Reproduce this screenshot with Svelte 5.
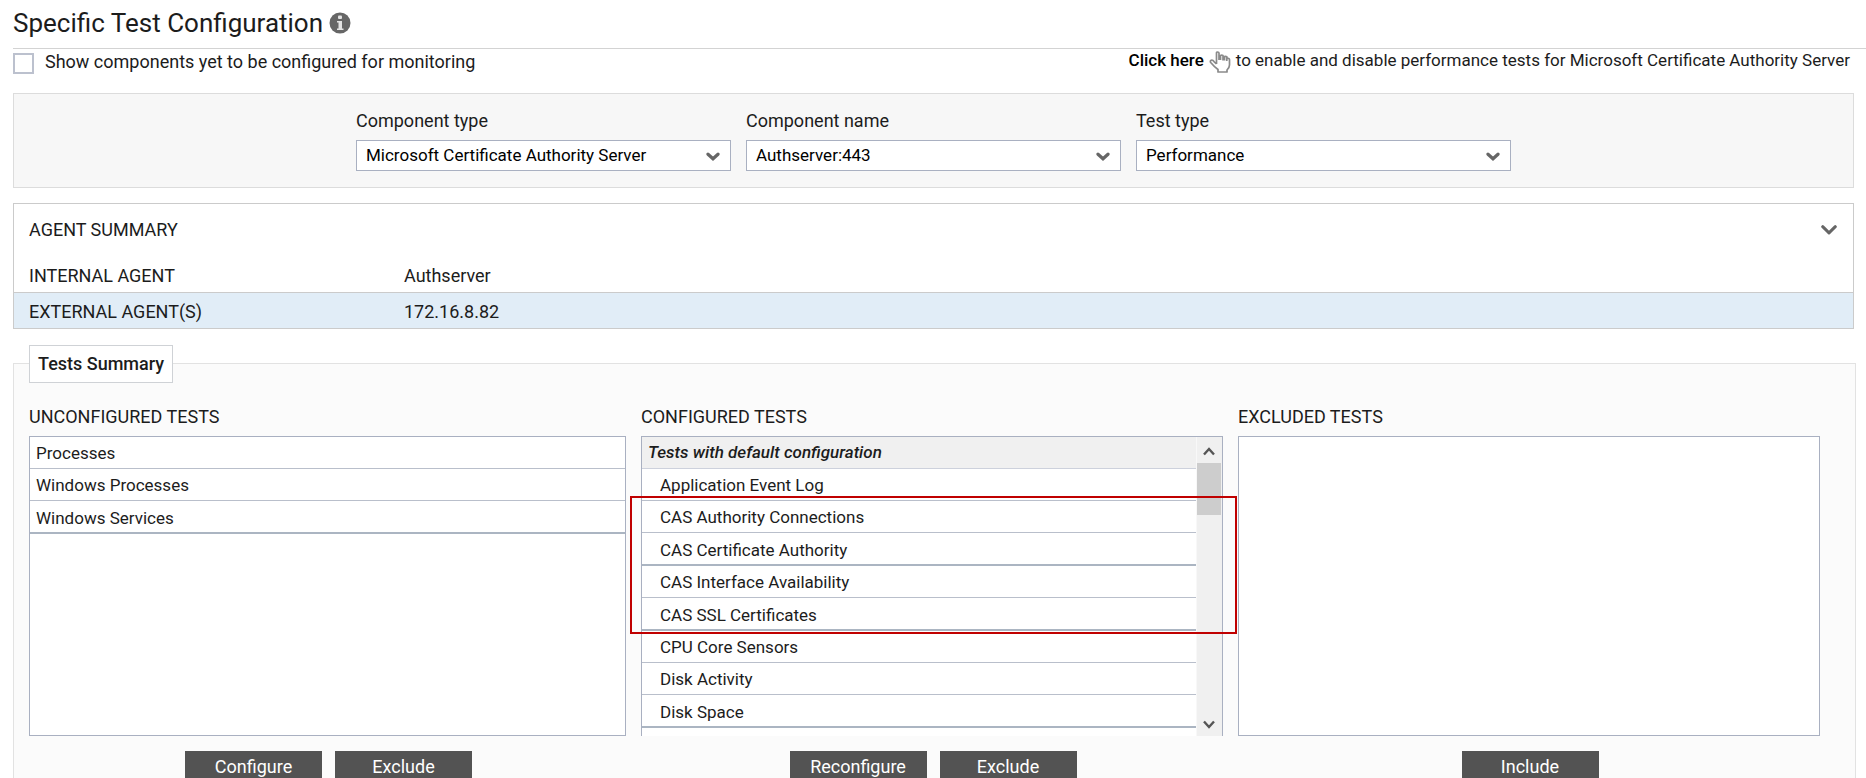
<script>
  const filters = [
    { id: 'component-type', label: 'Component type', options: ['Microsoft Certificate Authority Server'] },
    { id: 'component-name', label: 'Component name', options: ['Authserver:443'] },
    { id: 'test-type', label: 'Test type', options: ['Performance'] }
  ];
  const agents = [
    { kind: 'INTERNAL AGENT', host: 'Authserver' },
    { kind: 'EXTERNAL AGENT(S)', host: '172.16.8.82' }
  ];
  const unconfigured = [
    { name: 'Processes' },
    { name: 'Windows Processes' },
    { name: 'Windows Services', thick: true }
  ];
  const configured = [
    { name: 'Application Event Log' },
    { name: 'CAS Authority Connections' },
    { name: 'CAS Certificate Authority', thick: true },
    { name: 'CAS Interface Availability' },
    { name: 'CAS SSL Certificates', thick: true },
    { name: 'CPU Core Sensors' },
    { name: 'Disk Activity' },
    { name: 'Disk Space', thick: true }
  ];
</script>

<main>
  <header>
    <h1>Specific Test Configuration</h1>
    <svg class="info" viewBox="0 0 22 22" aria-hidden="true">
      <circle cx="11" cy="11" r="10.5" fill="#666" />
      <rect x="9" y="3.5" width="4" height="3.5" rx="1" fill="#e4e4e4" />
      <path d="M8 9h5v7.5h1.5v1.5h-6.500v-1.500h1.500v-6h-1.500z" fill="#e4e4e4" />
    </svg>
  </header>

  <div class="toolbar">
    <label class="check"><input type="checkbox" />Show components yet to be configured for monitoring</label>
    <p>
      <a href="#tests">Click here</a>
      <svg class="hand" viewBox="0 0 22 22" aria-hidden="true">
        <path d="M7.500 13V2q0-1 1.200-1t1.300 1V9M11.500 9V4.500q1.200-.6 2.500 0V9.500M15.500 9.500V5.500q1.200-.5 2.300.2V10M17.800 7.500q2.700-.5 2.700 1V14q0 2.500-2.500 5v2H9v-2.500Q5 15.500 1.700 11.500q-.9-1.700.5-2.200 1.600-.5 3 1.500L7.500 13" fill="none" stroke="#8a8a8a" stroke-width="1.700" stroke-linejoin="round" />
      </svg>
      <span>to enable and disable performance tests for Microsoft Certificate Authority Server</span>
    </p>
  </div>

  <section class="filters">
    {#each filters as f}
      <div class="field">
        <label for={f.id}>{f.label}</label>
        <div class="pick">
          <select id={f.id}>
            {#each f.options as o}<option>{o}</option>{/each}
          </select>
          <svg viewBox="0 0 14 10" aria-hidden="true"><path d="M2 2.200l5 4.600 5-4.600" fill="none" stroke="#666" stroke-width="3.200" stroke-linecap="round" /></svg>
        </div>
      </div>
    {/each}
  </section>

  <section class="agents">
    <div class="agents-head">
      <h2>AGENT SUMMARY</h2>
      <button class="collapse" aria-label="Collapse">
        <svg viewBox="0 0 16 10" aria-hidden="true"><path d="M1.700 1.700L8 7.800l6.300-6.100" fill="none" stroke="#666" stroke-width="3" stroke-linecap="round" stroke-linejoin="round" /></svg>
      </button>
    </div>
    <table>
      <tbody>
        {#each agents as a}
          <tr><th scope="row">{a.kind}</th><td>{a.host}</td></tr>
        {/each}
      </tbody>
    </table>
  </section>

  <section class="tests" id="tests">
    <h2 class="legend">Tests Summary</h2>
    <div class="columns">
      <div>
        <h3>UNCONFIGURED TESTS</h3>
        <ul class="list">
          {#each unconfigured as t}<li class:thick={t.thick}>{t.name}</li>{/each}
        </ul>
        <div class="actions"><button>Configure</button><button>Exclude</button></div>
      </div>
      <div>
        <h3>CONFIGURED TESTS</h3>
        <div class="list scroller">
          <ul>
            <li class="group">Tests with default configuration</li>
            {#each configured as t}<li class="sub" class:thick={t.thick}>{t.name}</li>{/each}
          </ul>
          <div class="bar">
            <svg viewBox="0 0 12 9" aria-hidden="true"><path d="M1 7.500l5-5.500 5 5.500" fill="none" stroke="#555" stroke-width="2.400" /></svg>
            <div class="thumb"></div>
            <svg class="down" viewBox="0 0 12 9" aria-hidden="true"><path d="M1 1.500l5 5.500 5-5.500" fill="none" stroke="#555" stroke-width="2.400" /></svg>
          </div>
          <div class="marker"></div>
        </div>
        <div class="actions"><button>Reconfigure</button><button>Exclude</button></div>
      </div>
      <div>
        <h3>EXCLUDED TESTS</h3>
        <ul class="list"></ul>
        <div class="actions"><button>Include</button></div>
      </div>
    </div>
  </section>
</main>

<style>
  :global(body) { background: #fff; }
  main {
    box-sizing: border-box;
    height: 100vh;
    overflow: hidden;
    padding-left: 13px;
    font-family: Roboto, "Liberation Sans", sans-serif;
    font-size: 18px;
    line-height: 24px;
    color: #1c1c1c;
  }
  main :global(*) { box-sizing: border-box; }
  h1, h2, h3, p, ul { margin: 0; padding: 0; font-weight: 400; font-size: inherit; }
  ul { list-style: none; }
  svg { display: block; flex: none; }
  button { font: inherit; border: 0; padding: 0; }

  header {
    display: flex;
    align-items: center;
    gap: 6px;
    height: 49px;
    padding-bottom: 2px;
    border-bottom: 1px solid #d3d3d3;
  }
  h1 { font-size: 26px; line-height: 32px; }
  .info { width: 22px; height: 22px; }

  .toolbar {
    display: flex;
    justify-content: space-between;
    height: 44px;
    padding: 0 16px 0 0;
    line-height: 22px;
  }
  .check { display: flex; align-items: center; gap: 11px; height: 26px; }
  .check input {
    appearance: none;
    width: 21px;
    height: 21px;
    margin: 2px 0 0;
    border: 2px solid #bcc1ce;
    background: #fff;
  }
  .toolbar p { display: flex; gap: 5px; font-size: 17px; }
  .toolbar a { color: #000; font-weight: 500; text-decoration: none; }
  .hand { width: 22px; height: 22px; margin-top: 2px; }

  .filters {
    display: flex;
    justify-content: center;
    gap: 15px;
    margin-right: 12px;
    padding: 15px 16px;
    height: 95px;
    border: 1px solid #dcdcdc;
    background: #f7f7f7;
  }
  .field { flex: 0 1 375px; }
  .field label { display: block; margin-bottom: 7px; }
  .pick { position: relative; }
  .pick select {
    appearance: none;
    display: block;
    width: 100%;
    height: 31px;
    padding: 0 32px 2px 9px;
    border: 1px solid #a9b0c1;
    border-radius: 0;
    background: #fff;
    color: #000;
    font: 17px Roboto, "Liberation Sans", sans-serif;
  }
  .pick svg { position: absolute; right: 11px; top: 12px; width: 14px; height: 10px; pointer-events: none; }

  .agents { margin: 15px 12px 0 0; border: 1px solid #cbcbcb; }
  .agents-head {
    display: flex;
    align-items: center;
    justify-content: space-between;
    height: 56px;
    padding: 0 16px 4px 15px;
  }
  .collapse { background: none; }
  .collapse svg { width: 16px; height: 10px; }
  table { width: 100%; border-collapse: collapse; table-layout: fixed; }
  th, td { height: 32px; padding: 0; text-align: left; font-weight: 400; }
  th { width: 390px; padding-left: 15px; }
  tr:last-child { background: #e1edf7; }
  tr:last-child th, tr:last-child td { height: 36px; padding-top: 4px; border-top: 1px solid #cbcbcb; }

  .tests {
    margin: 34px 10px 0 0;
    padding: 0 35px 40px 15px;
    border: 1px solid #e2e2e2;
    background: #fbfbfb;
  }
  .legend {
    width: fit-content;
    height: 38px;
    margin-top: -19px;
    padding: 0 8px;
    border: 1px solid #cfd2d6;
    background: #fff;
    font-weight: 500;
    line-height: 36px;
  }
  .columns { display: grid; grid-template-columns: 597fr 582fr 582fr; gap: 15px; margin-top: 22px; }
  h3 { margin-bottom: 7px; }
  .list { height: 300px; border: 1px solid #a9b0c1; background: #fff; }
  li {
    height: 32px;
    padding: 0 6px;
    border-bottom: 1px solid #b9bfcb;
    font-size: 17px;
    line-height: 32px;
  }
  li.thick { height: 33px; border-bottom: 2px solid #abb5c2; line-height: 34px; }
  li.sub { padding-left: 18px; }
  li.group { background: #f0f0f0; border-color: #cdd1dc; font-weight: 500; font-style: italic; line-height: 30px; }
  .scroller { position: relative; display: flex; border-bottom: 0; }
  .scroller ul { flex: 1; }
  .bar {
    display: flex;
    flex-direction: column;
    align-items: center;
    width: 26px;
    padding: 10px 1px 7px 0;
    background: #f0f0f0;
    border-left: 1px solid #f8f8f8;
  }
  .bar svg { width: 12px; height: 9px; }
  .thumb { width: 24px; height: 52px; margin-top: 7px; background: #cdcdcd; }
  .bar .down { margin-top: auto; }
  .marker { position: absolute; left: -12px; right: -15px; top: 59px; height: 138px; border: 2px solid #c00000; pointer-events: none; }

  .actions { display: flex; justify-content: center; gap: 13px; margin-top: 15px; padding-left: 2px; }
  .actions button { width: 137px; height: 32px; background: #535353; color: #fff; }
</style>
